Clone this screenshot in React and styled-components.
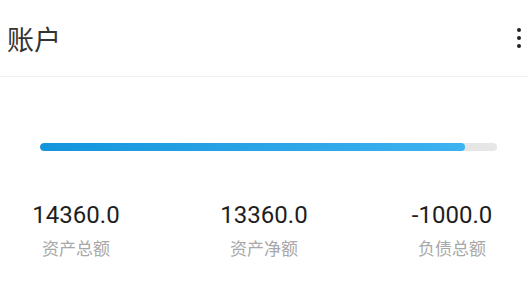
import React from 'react';
import styled, { createGlobalStyle } from 'styled-components';

const GlobalStyle = createGlobalStyle`
  body {
    margin: 0;
    background: #fff;
    font-family: Roboto, "Noto Sans CJK SC", sans-serif;
  }
`;

const stats = [
  { value: '14360.0', label: '资产总额' },
  { value: '13360.0', label: '资产净额' },
  { value: '-1000.0', label: '负债总额' },
];

const Page = styled.div`
  width: 528px;
  height: 299px;
  overflow: hidden;
`;

const Header = styled.header`
  height: 76px;
  display: flex;
  align-items: center;
  justify-content: space-between;
  padding: 0 5px 0 7px;
  border-bottom: 1px solid #f0f0f0;
`;

const Title = styled.h1`
  margin: 0;
  font-family: "Noto Sans CJK SC", sans-serif;
  font-size: 27px;
  font-weight: 400;
  color: #333;
`;

const MoreButton = styled.div`
  display: flex;
  flex-direction: column;
  align-items: center;
  gap: 4px;
  padding: 0 2px;

  span {
    width: 4px;
    height: 4px;
    border-radius: 50%;
    background: #222;
  }
`;

const Body = styled.section`
  padding: 66px 31px 0 40px;
`;

const Track = styled.div`
  height: 8px;
  border-radius: 4px;
  background: #e6e6e6;
  overflow: hidden;
`;

const Fill = styled.div`
  height: 100%;
  border-radius: 4px;
  background: linear-gradient(90deg, #1495dc, #3db3f0);
`;

const Stats = styled.div`
  display: grid;
  grid-template-columns: repeat(3, 188px);
  justify-content: center;
  margin-top: 51px;
`;

const Stat = styled.div`
  display: flex;
  flex-direction: column;
  align-items: center;
`;

const Value = styled.div`
  font-family: Roboto, sans-serif;
  font-size: 24px;
  font-weight: 400;
  line-height: 26px;
  color: #1e1e1e;
`;

const Label = styled.div`
  margin-top: 9px;
  font-family: "Noto Sans CJK SC", sans-serif;
  font-size: 17px;
  line-height: 22px;
  color: #a8a8a8;
`;

export default function App() {
  const ratio = 425 / 457;
  return (
    <Page>
      <GlobalStyle />
      <Header>
        <Title>账户</Title>
        <MoreButton>
          <span />
          <span />
          <span />
        </MoreButton>
      </Header>
      <Body>
        <Track>
          <Fill style={{ width: `${ratio * 100}%` }} />
        </Track>
      </Body>
      <Stats>
        {stats.map((s) => (
          <Stat key={s.label}>
            <Value>{s.value}</Value>
            <Label>{s.label}</Label>
          </Stat>
        ))}
      </Stats>
    </Page>
  );
}
